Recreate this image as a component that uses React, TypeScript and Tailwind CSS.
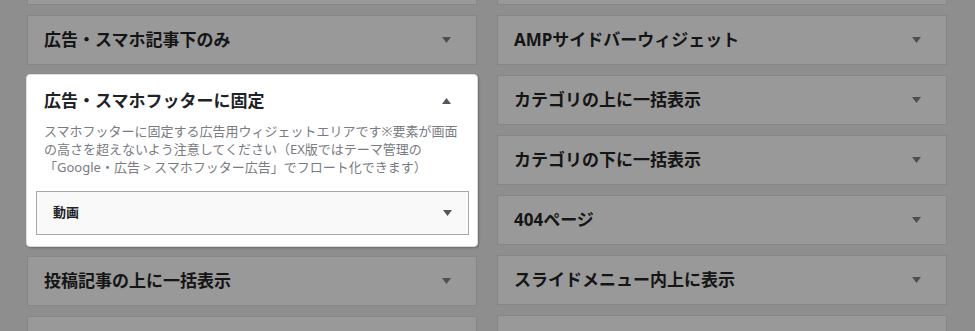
const font = "font-['Noto_Sans','Noto_Sans_CJK_JP',sans-serif]";

const leftPanels = ["広告・スマホ記事下のみ"];
const leftAfter = ["投稿記事の上に一括表示", ""];
const rightPanels = [
  "",
  "AMPサイドバーウィジェット",
  "カテゴリの上に一括表示",
  "カテゴリの下に一括表示",
  "404ページ",
  "スライドメニュー内上に表示",
  "",
];

function Arrow({ up = false, className = "" }: { up?: boolean; className?: string }) {
  return (
    <svg width="9" height="6" viewBox="0 0 9 6" className={className}>
      <polygon points={up ? "0,6 9,6 4.5,0" : "0,0 9,0 4.5,6"} fill="currentColor" />
    </svg>
  );
}

function Panel({ title }: { title: string }) {
  return (
    <div className="h-[50px] shrink-0 border border-[#868686] bg-[#999999] flex items-center justify-between pl-[16px] pr-[16px]">
      <h3 className="text-[17px] leading-6 font-bold text-[#151515] whitespace-nowrap">{title}</h3>
      {title && <Arrow className="text-[#4f4f4f] mr-[9px]" />}
    </div>
  );
}

function ActiveCard() {
  return (
    <div className="-m-px shrink-0 rounded-[4px] border border-[#dcdcde] bg-white shadow-[1px_1px_2px_rgba(0,0,0,0.25)]">
      <div className="pt-[14px] px-[17px] flex items-center justify-between">
        <h3 className="text-[17px] leading-6 font-bold text-[#1d2327] whitespace-nowrap">広告・スマホフッターに固定</h3>
        <Arrow up className="text-[#50575e] mr-[9px]" />
      </div>
      <p className="mt-[9px] px-[17px] text-[13px] leading-[18px] text-[#787c82] whitespace-nowrap">
        <span className="block">スマホフッターに固定する広告用ウィジェットエリアです※要素が画面</span>
        <span className="block">の高さを超えないよう注意してください（EX版ではテーマ管理の</span>
        <span className="block">「Google・広告 &gt; スマホフッター広告」でフロート化できます）</span>
      </p>
      <div className="mt-[15px] mb-[11px] ml-[9px] mr-[8px] h-[44px] border border-[#a7aaad] bg-[#f9f9f9] flex items-center justify-between pl-[16px] pr-[16px]">
        <span className="text-[13px] font-bold text-[#1d2327]">動画</span>
        <Arrow className="text-[#50575e]" />
      </div>
    </div>
  );
}

export default function App() {
  return (
    <div className={`${font} w-[975px] h-[331px] overflow-hidden bg-[#8e8e8e]`}>
      <div className="flex gap-[20px] pl-[27px] -mt-[45px]">
        {/* Left column */}
        <div className="w-[450px] flex flex-col gap-[10px]">
          <Panel title="" />
          {leftPanels.map((t) => (
            <Panel key={t} title={t} />
          ))}
          <ActiveCard />
          {leftAfter.map((t, i) => (
            <Panel key={i} title={t} />
          ))}
        </div>

        {/* Right column */}
        <div className="w-[450px] flex flex-col gap-[10px]">
          {rightPanels.map((t, i) => (
            <Panel key={i} title={t} />
          ))}
        </div>
      </div>
    </div>
  );
}
